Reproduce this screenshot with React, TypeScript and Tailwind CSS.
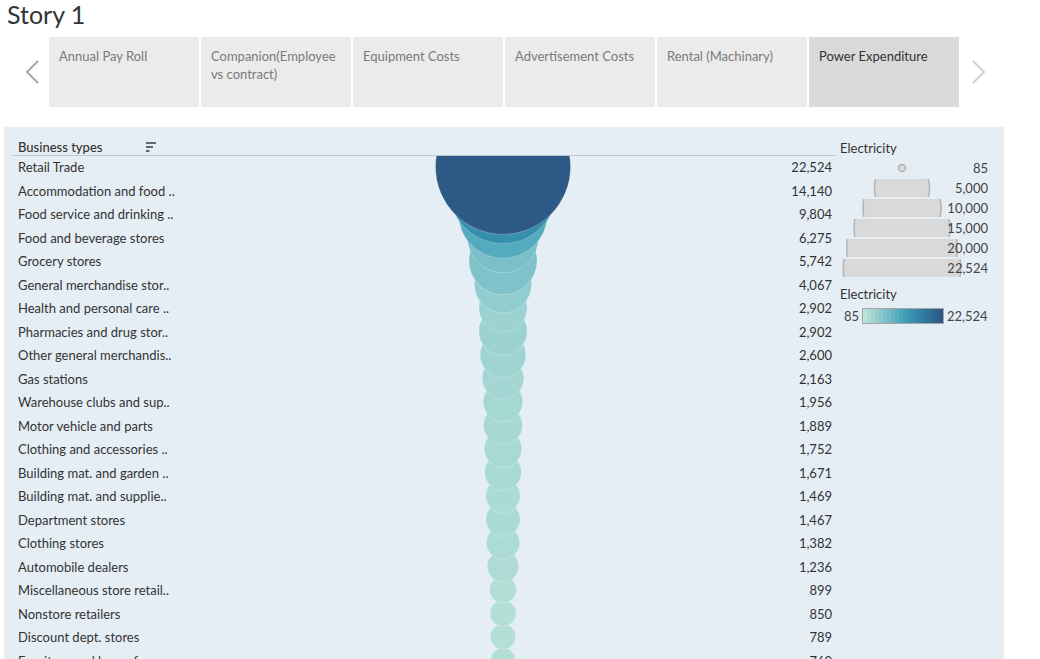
import React from "react";

const rows: [string, number][] = [
  ["Retail Trade", 22524],
  ["Accommodation and food ..", 14140],
  ["Food service and drinking ..", 9804],
  ["Food and beverage stores", 6275],
  ["Grocery stores", 5742],
  ["General merchandise stor..", 4067],
  ["Health and personal care ..", 2902],
  ["Pharmacies and drug stor..", 2902],
  ["Other general merchandis..", 2600],
  ["Gas stations", 2163],
  ["Warehouse clubs and sup..", 1956],
  ["Motor vehicle and parts", 1889],
  ["Clothing and accessories ..", 1752],
  ["Building mat. and garden ..", 1671],
  ["Building mat. and supplie..", 1469],
  ["Department stores", 1467],
  ["Clothing stores", 1382],
  ["Automobile dealers", 1236],
  ["Miscellaneous store retail..", 899],
  ["Nonstore retailers", 850],
  ["Discount dept. stores", 789],
  ["Furniture and home furn..", 760],
];

const tabs = [
  "Annual Pay Roll",
  "Companion(Employee vs contract)",
  "Equipment Costs",
  "Advertisement Costs",
  "Rental (Machinary)",
  "Power Expenditure",
];

// tableau blue-teal
const palette = [
  "#bce4d8", "#aedcd5", "#a1d5d2", "#95cecf", "#89c8cc", "#7ec1ca", "#72bac6",
  "#66b2c2", "#59acbe", "#4ba5ba", "#419eb6", "#3b96b2", "#358ead", "#3586a7",
  "#347ea1", "#32779b", "#316f96", "#2f6790", "#2d608a", "#2c5985",
];

const MIN = 85;
const MAX = 22524;
const ROW_H = 23.5;

function hexToRgb(h: string) {
  const n = parseInt(h.slice(1), 16);
  return [(n >> 16) & 255, (n >> 8) & 255, n & 255];
}

function colorFor(v: number) {
  const t = Math.min(1, Math.max(0, (v - MIN) / (MAX - MIN))) * (palette.length - 1);
  const i = Math.floor(t);
  const j = Math.min(palette.length - 1, i + 1);
  const f = t - i;
  const a = hexToRgb(palette[i]);
  const b = hexToRgb(palette[j]);
  const c = a.map((x, k) => Math.round(x + (b[k] - x) * f));
  return `rgb(${c[0]},${c[1]},${c[2]})`;
}

const fmt = (v: number) => v.toLocaleString("en-US");

function BubbleColumn() {
  const w = 142;
  const h = rows.length * ROW_H;
  return (
    <svg width={w} height={h} className="block">
      {rows
        .map(([name, v], i) => ({ name, v, i }))
        .reverse()
        .map(({ name, v, i }) => (
          <circle
            key={name}
            cx={w / 2}
            cy={i * ROW_H + ROW_H / 2 - 1}
            r={0.45 * Math.sqrt(v)}
            fill={colorFor(v)}
            stroke="rgba(255,255,255,0.25)"
            strokeWidth={1}
          />
        ))}
    </svg>
  );
}

function SizeLegendRow({ v }: { v: number }) {
  const r = 0.391 * Math.sqrt(v);
  const id = `clip-${v}`;
  return (
    <div className="relative flex h-[20px] w-[148px] items-center justify-end">
      <svg width={148} height={20} className="absolute left-0 top-0">
        <defs>
          <clipPath id={id}>
            <rect x={0} y={1} width={148} height={18} />
          </clipPath>
        </defs>
        {v < 200 ? (
          <circle cx={62} cy={10} r={3.6} fill="#dcdcdc" stroke="#b0b0b0" strokeWidth={1.5} />
        ) : (
          <circle
            cx={62}
            cy={10}
            r={r}
            fill="#d9d9d9"
            stroke="#b4b4b4"
            strokeWidth={1.5}
            clipPath={`url(#${id})`}
          />
        )}
      </svg>
      <span className="relative text-[13px] leading-[20px] text-[#444]">{fmt(v)}</span>
    </div>
  );
}

export default function App() {
  return (
    <div className="h-[659px] w-[1040px] overflow-hidden bg-white font-['Lato',sans-serif]">
      {/* Title */}
      <div className="h-[37px] pl-[7px] text-[25px] leading-[28px] text-[#333]">Story 1</div>

      {/* Story points */}
      <div className="flex h-[70px]">
        <div className="flex w-[49px] items-center pl-[24px]">
          <svg width="16" height="24" viewBox="0 0 16 24">
            <polyline points="14,1 3,12 14,23" fill="none" stroke="#a8a8a8" strokeWidth="2" />
          </svg>
        </div>
        <div className="flex gap-[2px]">
          {tabs.map((t, i) => (
            <div
              key={t}
              className={
                i === 5
                  ? "w-[150px] bg-[#d9d9d9] px-[10px] pt-[10px] text-[13px] leading-[18px] text-[#333]"
                  : "w-[150px] bg-[#ebebeb] px-[10px] pt-[10px] text-[13px] leading-[18px] text-[#7a7a7a]"
              }
            >
              {t}
            </div>
          ))}
        </div>
        <div className="ml-[12px] flex items-center">
          <svg width="16" height="24" viewBox="0 0 16 24">
            <polyline points="2,1 13,12 2,23" fill="none" stroke="#cfcfcf" strokeWidth="2" />
          </svg>
        </div>
      </div>

      {/* Viz panel */}
      <div className="ml-[4px] mt-[20px] flex w-[1000px] bg-[#e6eef5] pl-[8px] pt-[13px]">
        {/* Table */}
        <div className="w-[824px] text-[13px] text-[#333]">
          <div className="flex h-[16px] items-center border-b border-[#c6c9cc] pl-[6px] font-medium">
            <span className="w-[128px]">Business types</span>
            <svg width="11" height="11" viewBox="0 0 11 11">
              <rect x="0" y="0" width="10" height="2" fill="#666" />
              <rect x="0" y="4" width="7" height="2" fill="#666" />
              <rect x="0" y="8" width="3.5" height="2" fill="#666" />
            </svg>
          </div>
          <div className="flex">
            <div className="w-[420px] pl-[6px]">
              {rows.map(([name]) => (
                <div key={name} className="h-[23.5px] truncate leading-[23px]">
                  {name}
                </div>
              ))}
            </div>
            <div className="w-[142px]">
              <BubbleColumn />
            </div>
            <div className="flex-1 pr-[4px] text-right">
              {rows.map(([name, v]) => (
                <div key={name} className="h-[23.5px] leading-[23px]">
                  {fmt(v)}
                </div>
              ))}
            </div>
          </div>
        </div>

        {/* Legends */}
        <div className="ml-[4px] w-[150px] text-[13px] text-[#333]">
          <div className="h-[16px] leading-[16px]">Electricity</div>
          <div className="mt-[2px]">
            {[85, 5000, 10000, 15000, 20000, 22524].map((v) => (
              <SizeLegendRow key={v} v={v} />
            ))}
          </div>
          <div className="mt-[8px] h-[16px] leading-[16px]">Electricity</div>
          <div className="mt-[6px] flex h-[16px] items-center">
            <span className="w-[22px] pl-[4px] leading-[16px] text-[#444]">85</span>
            <div className="flex h-[16px] w-[82px] border border-[#a5a5a5]">
              {palette.map((c) => (
                <div key={c} className="h-full flex-1" style={{ background: c }} />
              ))}
            </div>
            <span className="ml-[3px] leading-[16px] text-[#444]">22,524</span>
          </div>
        </div>
      </div>
    </div>
  );
}
